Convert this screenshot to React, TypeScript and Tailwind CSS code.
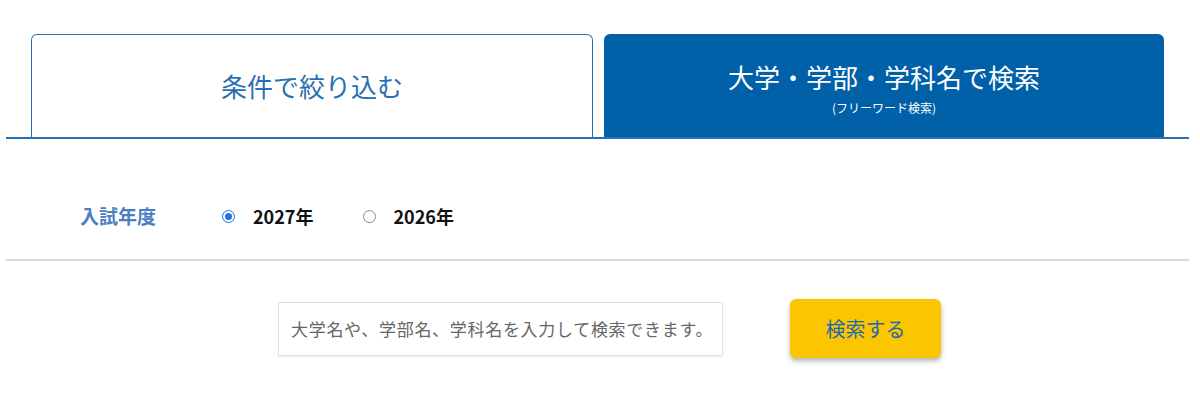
const FONT = { fontFamily: '"Noto Sans CJK JP", "Noto Sans", sans-serif' }

export default function App() {
  return (
    <div className="min-h-[400px] bg-white pl-[6px]" style={FONT}>
      <div className="w-[1183px]">
        {/* tabs */}
        <div className="flex gap-[11px] px-[25px] pt-[34px]">
          <button className="flex h-[103px] flex-1 items-center justify-center rounded-t-[6px] border-[1.5px] border-b-0 border-[#2a72b8] bg-white text-[26px] leading-[34px] text-[#2a6fb2]">
            条件で絞り込む
          </button>
          <button className="flex h-[103px] flex-1 flex-col items-center rounded-t-[6px] bg-[#0060a8] pt-[26px] text-white">
            <span className="text-[26px] leading-[34px]">大学・学部・学科名で検索</span>
            <span className="mt-[7px] text-[12px] leading-[14px]">(フリーワード検索)</span>
          </button>
        </div>
        <div className="h-[2px] bg-[#2a72b8]" />

        {/* year */}
        <div className="mt-[65px] mb-[31px] flex h-6 items-center pl-[74px]">
          <span className="w-[142px] text-[19px] font-bold text-[#4a80c2]">入試年度</span>
          <label className="flex items-center">
            <span className="flex h-[13px] w-[13px] items-center justify-center rounded-full border-[1.5px] border-[#1a73e8]">
              <span className="h-[7px] w-[7px] rounded-full bg-[#1a73e8]" />
            </span>
            <span className="ml-[18px] text-[18px] font-bold text-[#111]">2027年</span>
          </label>
          <label className="ml-[50px] flex items-center">
            <span className="h-[13px] w-[13px] rounded-full border border-[#8a8a8a]" />
            <span className="ml-[17px] text-[18px] font-bold text-[#111]">2026年</span>
          </label>
        </div>
        <div className="h-[2px] bg-[#dadada]" />

        {/* search */}
        <div className="flex items-center pl-[272px] pt-[38px]">
          <div className="flex h-[54px] w-[445px] items-center border border-[#e0e0e0] pl-[12px] shadow-[0_1px_2px_rgba(0,0,0,0.08)]">
            <span className="text-[17px] tracking-[0.7px] text-[#666]">大学名や、学部名、学科名を入力して検索できます。</span>
          </div>
          <button className="ml-[67px] flex h-[59px] w-[151px] items-center justify-center rounded-[6px] bg-[#fbc600] text-[20px] text-[#1e69ad] shadow-[0_3px_5px_rgba(0,0,0,0.3)]">
            検索する
          </button>
        </div>
      </div>
    </div>
  )
}
